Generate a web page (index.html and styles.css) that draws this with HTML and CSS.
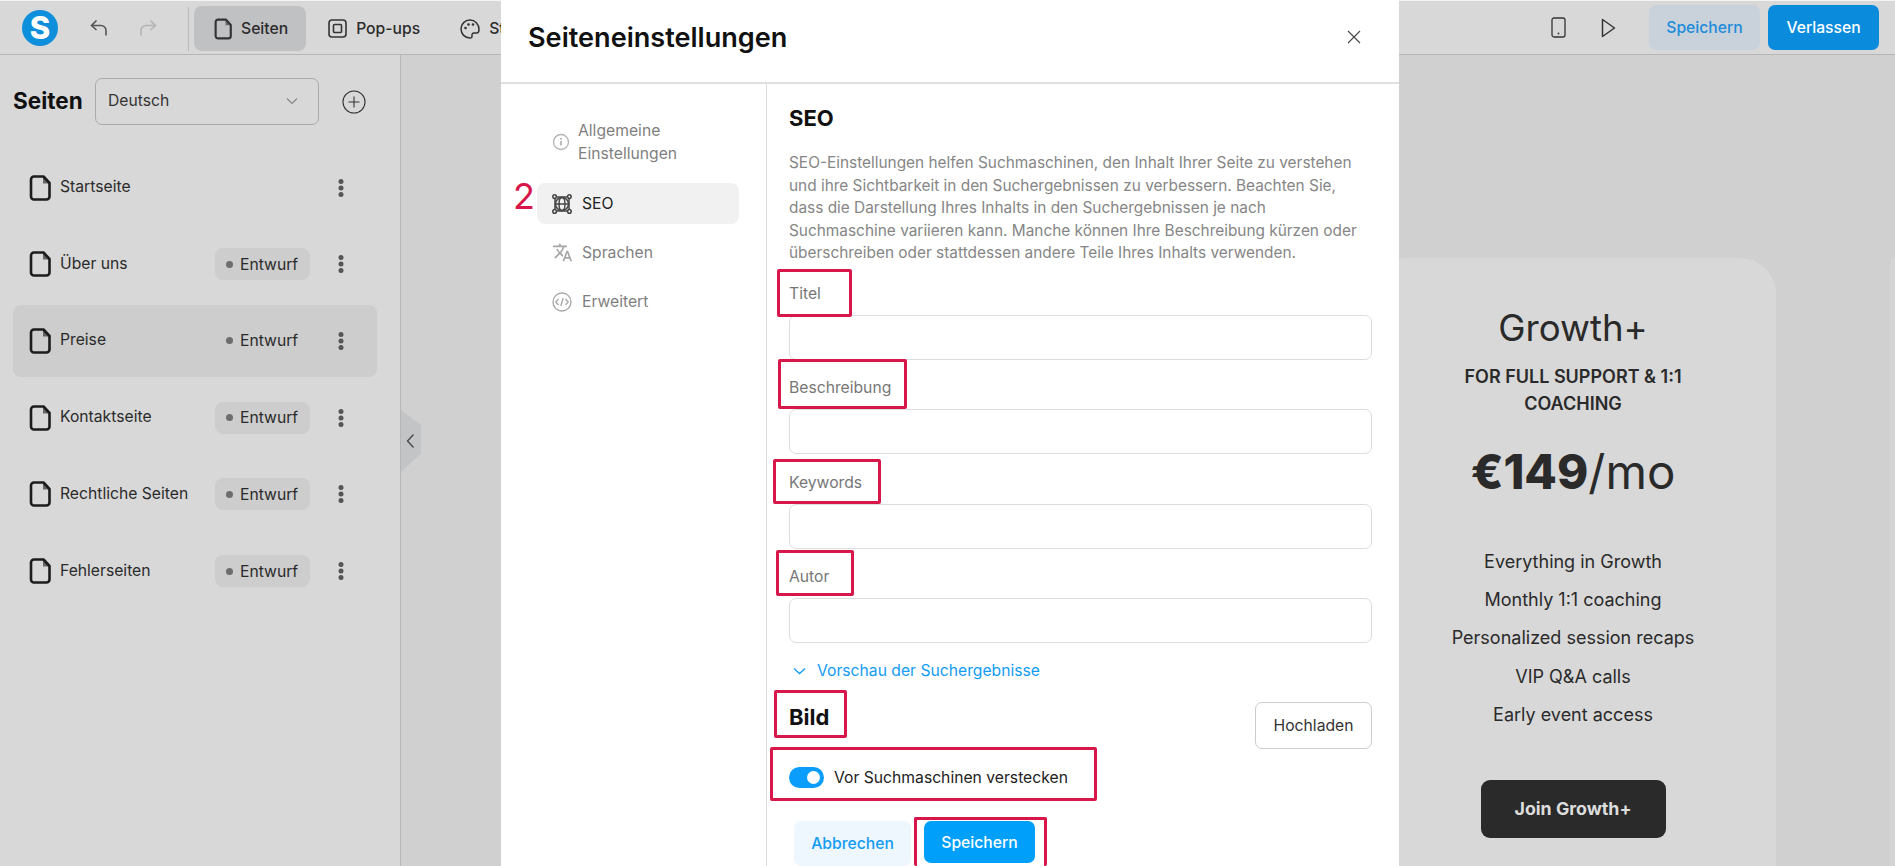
FILE: index.html
```html
<!DOCTYPE html>
<html lang="de">
<head>
  <meta charset="UTF-8" />
  <title>Seiteneinstellungen</title>
  <link rel="stylesheet" href="styles.css">
</head>
<body>
  <svg class="sprite" width="0" height="0">
    <symbol id="file" viewBox="0 0 22 26">
      <path d="M5 1.500h9.500l6 6.500v13.500a3 3 0 0 1-3 3H5a3 3 0 0 1-3-3v-17a3 3 0 0 1 3-3z" fill="none" stroke="currentColor" stroke-width="2.600" stroke-linejoin="round"/>
      <path d="M14 2v6.500h6z" fill="currentColor" opacity=".6"/>
    </symbol>
    <symbol id="dots" viewBox="0 0 6 18">
      <circle cx="3" cy="2.500" r="2.500" fill="currentColor"/>
      <circle cx="3" cy="9" r="2.500" fill="currentColor"/>
      <circle cx="3" cy="15.500" r="2.500" fill="currentColor"/>
    </symbol>
  </svg>

  <div class="app">
    <header class="topbar">
      <div class="logo">S</div>
      <svg class="history" width="18" height="18" viewBox="0 0 18 18"><path d="M6.500 1.500 1.500 6.500l5 4.500M2 6.500h9a5 5 0 0 1 5 5v5" fill="none" stroke="currentColor" stroke-width="1.600"/></svg>
      <svg class="history redo" width="18" height="18" viewBox="0 0 18 18"><path d="M11.500 1.500l5 5-5 4.500M16 6.500H7a5 5 0 0 0-5 5v5" fill="none" stroke="currentColor" stroke-width="1.600"/></svg>
      <div class="divider"></div>
      <a class="tab tab-active">
        <svg class="tab-icon" width="18" height="22"><use href="#file"/></svg>
        Seiten
      </a>
      <a class="tab">
        <svg class="tab-icon" width="19" height="19" viewBox="0 0 19 19"><rect x="1" y="1" width="17" height="17" rx="3" fill="none" stroke="currentColor" stroke-width="1.600"/><rect x="5.500" y="5.500" width="8" height="8" rx="1" fill="none" stroke="currentColor" stroke-width="1.600"/></svg>
        Pop-ups
      </a>
      <a class="tab">
        <svg class="tab-icon" width="20" height="20" viewBox="0 0 20 20"><path d="M10 1a9 9 0 0 0 0 18c1.600 0 2.200-1 2-2.200-.3-1.500.4-2.800 2-2.800h2.500c1.600 0 2.500-1 2.500-3.500C19 5 15 1 10 1z" fill="none" stroke="currentColor" stroke-width="1.500"/><circle cx="5.500" cy="9" r="1.300" fill="currentColor"/><circle cx="8.500" cy="5.500" r="1.300" fill="currentColor"/><circle cx="13" cy="5.500" r="1.300" fill="currentColor"/></svg>
        Stile
      </a>
      <div class="topbar-right">
        <svg class="top-icon" width="15" height="21" viewBox="0 0 15 21"><rect x="1" y="1" width="13" height="19" rx="2" fill="none" stroke="currentColor" stroke-width="1.300"/><circle cx="7.500" cy="16.500" r=".9" fill="currentColor"/></svg>
        <svg class="top-icon play" width="15" height="20" viewBox="0 0 15 20"><path d="M1.500 1.500v17L13.500 10z" fill="none" stroke="currentColor" stroke-width="1.500" stroke-linejoin="round"/></svg>
        <button class="top-btn top-save">Speichern</button>
        <button class="top-btn top-leave">Verlassen</button>
      </div>
    </header>

    <div class="workspace">
      <aside class="sidebar">
        <div class="sidebar-head">
          <h2>Seiten</h2>
          <div class="lang-select">
            Deutsch
            <svg width="12" height="8" viewBox="0 0 12 8"><path d="M1 1.500l5 5 5-5" fill="none" stroke="currentColor" stroke-width="1.200"/></svg>
          </div>
          <svg class="add" width="24" height="24" viewBox="0 0 24 24"><circle cx="12" cy="12" r="11" fill="none" stroke="currentColor" stroke-width="1.100"/><path d="M12 6.500v11M6.500 12h11" stroke="currentColor" stroke-width="1.100"/></svg>
        </div>
        <ul class="page-list">
          <li class="page-row">
            <svg class="page-icon" width="22" height="26"><use href="#file"/></svg>
            <span class="page-name">Startseite</span>
            <svg class="page-menu" width="6" height="18"><use href="#dots"/></svg>
          </li>
          <li class="page-row">
            <svg class="page-icon" width="22" height="26"><use href="#file"/></svg>
            <span class="page-name">Über uns</span>
            <span class="badge">Entwurf</span>
            <svg class="page-menu" width="6" height="18"><use href="#dots"/></svg>
          </li>
          <li class="page-row page-row-active">
            <svg class="page-icon" width="22" height="26"><use href="#file"/></svg>
            <span class="page-name">Preise</span>
            <span class="badge">Entwurf</span>
            <svg class="page-menu" width="6" height="18"><use href="#dots"/></svg>
          </li>
          <li class="page-row">
            <svg class="page-icon" width="22" height="26"><use href="#file"/></svg>
            <span class="page-name">Kontaktseite</span>
            <span class="badge">Entwurf</span>
            <svg class="page-menu" width="6" height="18"><use href="#dots"/></svg>
          </li>
          <li class="page-row">
            <svg class="page-icon" width="22" height="26"><use href="#file"/></svg>
            <span class="page-name">Rechtliche Seiten</span>
            <span class="badge">Entwurf</span>
            <svg class="page-menu" width="6" height="18"><use href="#dots"/></svg>
          </li>
          <li class="page-row">
            <svg class="page-icon" width="22" height="26"><use href="#file"/></svg>
            <span class="page-name">Fehlerseiten</span>
            <span class="badge">Entwurf</span>
            <svg class="page-menu" width="6" height="18"><use href="#dots"/></svg>
          </li>
        </ul>
      </aside>

      <main class="canvas">
        <div class="collapse">
          <svg width="9" height="16" viewBox="0 0 9 16"><path d="M7.500 1.500 1.500 8l6 6.500" fill="none" stroke="currentColor" stroke-width="1.300"/></svg>
        </div>
        <section class="price-card">
          <h3>Growth+</h3>
          <p class="price-sub">FOR FULL SUPPORT &amp; 1:1 COACHING</p>
          <p class="price"><b>€149</b>/mo</p>
          <ul class="price-features">
            <li>Everything in Growth</li>
            <li>Monthly 1:1 coaching</li>
            <li>Personalized session recaps</li>
            <li>VIP Q&amp;A calls</li>
            <li>Early event access</li>
          </ul>
          <button class="join">Join Growth+</button>
        </section>
        <div class="canvas-edge"></div>
      </main>
    </div>
  </div>

  <div class="modal">
    <div class="modal-head">
      <h1>Seiteneinstellungen</h1>
      <svg class="close" width="14" height="14" viewBox="0 0 14 14"><path d="M1 1l12 12M13 1 1 13" stroke="currentColor" stroke-width="1.100"/></svg>
    </div>
    <div class="modal-body">
      <nav class="modal-nav">
        <a class="nav-item nav-general">
          <svg width="18" height="18" viewBox="0 0 18 18"><circle cx="9" cy="9" r="7.500" fill="none" stroke="#b4b4b4" stroke-width="1.300"/><path d="M9 8v4.500" stroke="#999" stroke-width="1.300"/><circle cx="9" cy="5.800" r=".9" fill="#999"/></svg>
          <span>Allgemeine Einstellungen</span>
        </a>
        <a class="nav-item nav-active">
          <svg width="20" height="20" viewBox="0 0 20 20" fill="none" stroke="#444" stroke-width="1.500"><circle cx="2.600" cy="2.600" r="1.800"/><circle cx="17.400" cy="2.600" r="1.800"/><circle cx="2.600" cy="17.400" r="1.800"/><circle cx="17.400" cy="17.400" r="1.800"/><path d="M4.500 3h11M4.500 17h11M3 4.500v11M17 4.500v11"/><circle cx="10" cy="10" r="6.500"/><ellipse cx="10" cy="10" rx="3" ry="6.500"/><path d="M3.500 10h13"/></svg>
          <span>SEO</span>
        </a>
        <a class="nav-item nav-lang">
          <svg width="21" height="21" viewBox="0 0 24 24"><path fill="#a6a6a6" d="M12.870 15.070l-2.540-2.510.03-.03c1.740-1.940 2.980-4.170 3.710-6.530H17V4h-7V2H8v2H1v1.990h11.170C11.500 7.920 10.440 9.750 9 11.350 8.070 10.320 7.300 9.190 6.690 8h-2c.73 1.630 1.730 3.170 2.980 4.560l-5.090 5.020L4 19l5-5 3.110 3.110.76-2.040zM18.500 10h-2L12 22h2l1.120-3h4.750L21 22h2l-4.500-12zm-2.620 7l1.620-4.330L19.120 17h-3.240z"/></svg>
          <span>Sprachen</span>
        </a>
        <a class="nav-item">
          <svg width="20" height="20" viewBox="0 0 20 20" fill="none" stroke="#a6a6a6" stroke-width="1.300"><circle cx="10" cy="10" r="9"/><path d="M6.500 7 3.800 10l2.700 3M13.500 7l2.700 3-2.700 3M11.200 6l-2.400 8"/></svg>
          <span>Erweitert</span>
        </a>
      </nav>

      <div class="seo-panel">
        <h2>SEO</h2>
        <p class="seo-text">SEO-Einstellungen helfen Suchmaschinen, den Inhalt Ihrer Seite zu verstehen und ihre Sichtbarkeit in den Suchergebnissen zu verbessern. Beachten Sie, dass die Darstellung Ihres Inhalts in den Suchergebnissen je nach Suchmaschine variieren kann. Manche können Ihre Beschreibung kürzen oder überschreiben oder stattdessen andere Teile Ihres Inhalts verwenden.</p>
        <label class="field-label">Titel</label>
        <input class="field" type="text" />
        <label class="field-label">Beschreibung</label>
        <input class="field" type="text" />
        <label class="field-label">Keywords</label>
        <input class="field" type="text" />
        <label class="field-label">Autor</label>
        <input class="field" type="text" />
        <a class="preview-link">
          <svg width="13" height="8" viewBox="0 0 13 8"><path d="M1 1.500l5.500 5 5.500-5" fill="none" stroke="currentColor" stroke-width="1.300"/></svg>
          Vorschau der Suchergebnisse
        </a>
        <div class="image-row">
          <h2>Bild</h2>
          <button class="upload">Hochladen</button>
        </div>
        <div class="toggle-row">
          <span class="toggle"></span>
          Vor Suchmaschinen verstecken
        </div>
        <div class="modal-actions">
          <button class="btn-cancel">Abbrechen</button>
          <button class="btn-save">Speichern</button>
        </div>
      </div>
    </div>

    <span class="step-number">2</span>
    <span class="mark mark-title"></span>
    <span class="mark mark-desc"></span>
    <span class="mark mark-keywords"></span>
    <span class="mark mark-author"></span>
    <span class="mark mark-image"></span>
    <span class="mark mark-toggle"></span>
    <span class="mark mark-save"></span>
  </div>
</body>
</html>
```
FILE: styles.css
```css
* {
  box-sizing: border-box;
}

html, body {
  height: 100%;
}

body {
  margin: 0;
  overflow: hidden;
  font-family: 'Inter', 'Liberation Sans', sans-serif;
  font-size: 15.7px;
  color: #222;
  background: #d0d0d0;
}

.sprite {
  position: absolute;
}

ul {
  list-style: none;
  margin: 0;
  padding: 0;
}

button {
  font-family: inherit;
  cursor: pointer;
  border: none;
}

.app {
  display: flex;
  flex-direction: column;
  height: 100vh;
  padding-top: 1px;
  background: #f4f4f4;
}

/* top bar */
.topbar {
  display: flex;
  align-items: center;
  height: 54px;
  flex-shrink: 0;
  padding: 0 16px 0 22px;
  background: #d8d8d8;
  border-bottom: 1px solid #b6b6b6;
}

.logo {
  display: flex;
  align-items: center;
  justify-content: center;
  width: 36px;
  height: 36px;
  border-radius: 50%;
  background: #0d8fdc;
  color: #fff;
  font-size: 31px;
  font-weight: 800;
  line-height: 1;
}

.history {
  margin-left: 32px;
  color: #555;
}

.history.redo {
  margin-left: 31px;
  color: #b4b4b4;
}

.divider {
  width: 1px;
  height: 44px;
  margin: 2px 5px 0 31px;
  background: #bbb;
}

.tab {
  display: flex;
  align-items: center;
  gap: 9px;
  height: 45px;
  margin-top: 2px;
  padding: 0 18px 0 20px;
  border-radius: 8px;
  color: #2b2b2b;
  font-weight: 500;
}

.tab + .tab {
  margin-left: 2px;
}

.tab-icon {
  flex-shrink: 0;
  color: #333;
}

.tab-active {
  background: #c0c1c3;
}

.topbar-right {
  display: flex;
  align-items: center;
  margin-left: auto;
}

.top-icon {
  color: #333;
}

.top-icon.play {
  margin: 0 33px 0 35px;
}

.top-btn {
  width: 111px;
  height: 45px;
  border-radius: 7px;
  font-size: 15.7px;
  font-weight: 500;
}

.top-save {
  background: #c9d2da;
  color: #1b8bdc;
  margin-right: 8px;
}

.top-leave {
  background: #0a8bdc;
  color: #fff;
}

/* sidebar */
.workspace {
  display: flex;
  flex: 1;
  min-height: 0;
  overflow: hidden;
}

.sidebar {
  width: 401px;
  flex-shrink: 0;
  padding: 23px 23px 0 13px;
  background: #d8d8d8;
  border-right: 1px solid #b6b6b6;
}

.sidebar-head {
  display: flex;
  align-items: center;
  height: 47px;
}

.sidebar-head h2 {
  margin: 0 0 2px;
  width: 82px;
  font-size: 22.500px;
  font-weight: 700;
  color: #111;
}

.lang-select {
  display: flex;
  align-items: center;
  justify-content: space-between;
  width: 224px;
  height: 47px;
  padding: 0 20px 2px 12px;
  border: 1px solid #aaa;
  border-radius: 7px;
  color: #333;
}

.lang-select svg {
  color: #888;
}

.add {
  margin-left: 23px;
  color: #333;
}

.page-list {
  display: flex;
  flex-direction: column;
  gap: 4.700px;
  margin-top: 26.600px;
}

.page-row {
  display: flex;
  align-items: center;
  height: 72px;
  padding: 0 33px 0 16px;
  border-radius: 8px;
  color: #2a2a2a;
}

.page-row-active {
  background: #cdcdcd;
}

.page-icon {
  flex-shrink: 0;
  color: #1c1c1c;
  margin-right: 9px;
}

.page-name {
  flex: 1;
  margin-top: -2px;
}

.badge {
  display: flex;
  align-items: center;
  gap: 7px;
  width: 95px;
  height: 32px;
  padding-left: 11px;
  border-radius: 8px;
  background: #cdcdcd;
  color: #2a2a2a;
}

.badge::before {
  content: "";
  width: 7px;
  height: 7px;
  border-radius: 50%;
  background: #6d6d6d;
}

.page-menu {
  margin-left: 28px;
  color: #555;
}

/* canvas behind the modal */
.canvas {
  flex: 1;
  display: flex;
  position: relative;
  min-width: 0;
  overflow: hidden;
  padding-top: 203px;
  background: #d0d0d0;
}

.collapse {
  position: absolute;
  left: 0;
  top: 355px;
  display: flex;
  align-items: center;
  padding-left: 5px;
  width: 20px;
  height: 62px;
  background: #c3c4c6;
  color: #444;
  clip-path: polygon(0 0, 100% 24%, 100% 70%, 0 100%);
}

.price-card {
  flex-shrink: 0;
  width: 406px;
  height: 700px;
  margin-left: 969px;
  padding: 48px 60px 0;
  border-radius: 36px;
  background: #d8d8d8;
  color: #2a2a2a;
  text-align: center;
}

.price-card h3 {
  margin: 0;
  font-size: 36.600px;
  line-height: 44px;
  font-weight: 400;
}

.price-sub {
  margin: 12.500px 0 0;
  font-size: 18px;
  line-height: 27px;
  font-weight: 600;
}

.price {
  margin: 27.500px 0 0;
  font-size: 47.400px;
  line-height: 56px;
}

.price b {
  font-weight: 800;
}

.price-features {
  margin: 46px -30px 0;
  font-size: 18px;
}

.price-features li {
  height: 32px;
  line-height: 32px;
  margin-bottom: 6.200px;
}

.join {
  width: 185px;
  height: 58px;
  margin-top: 43px;
  border-radius: 9px;
  background: #2a2a2a;
  color: #ddd;
  font-size: 17.800px;
  font-weight: 700;
}

.canvas-edge {
  margin-left: auto;
  width: 5px;
  background: #d4d4d4;
}

/* modal */
.modal {
  position: absolute;
  left: 501px;
  top: 0;
  width: 898px;
  height: 100%;
  display: flex;
  flex-direction: column;
  overflow: hidden;
  background: #fff;
}

.modal-head {
  display: flex;
  align-items: center;
  justify-content: space-between;
  flex-shrink: 0;
  height: 84px;
  padding: 0 38px 8px 27px;
  border-bottom: 2px solid #e0e0e0;
}

.modal-head h1 {
  margin: 0;
  font-size: 27.100px;
  font-weight: 600;
  color: #111;
}

.close {
  color: #444;
}

.modal-body {
  display: flex;
  flex: 1;
  min-height: 0;
}

.modal-nav {
  width: 266px;
  flex-shrink: 0;
  padding: 32px 27px 0 36px;
  border-right: 1px solid #dcdcdc;
}

.nav-item {
  display: flex;
  align-items: center;
  gap: 10px;
  height: 41px;
  margin-bottom: 8px;
  padding-left: 15px;
  border-radius: 8px;
  color: #7f7f7f;
}

.nav-item svg {
  flex-shrink: 0;
}

.nav-general {
  height: 52px;
  gap: 8px;
  margin-bottom: 15px;
  line-height: 23px;
}

.nav-general span {
  width: 130px;
}

.nav-lang {
  gap: 9px;
}

.nav-active {
  background: #f1f1f1;
  color: #222;
}

.seo-panel {
  flex: 1;
  min-width: 0;
  padding: 20px 27px 0 22px;
}

.seo-panel h2 {
  margin: 0;
  font-size: 22px;
  line-height: 28px;
  font-weight: 700;
  color: #111;
}

.seo-text {
  margin: 20px 0 0;
  font-size: 15.400px;
  line-height: 22.500px;
  color: #868686;
}

.field-label {
  display: block;
  margin-top: 16.500px;
  height: 24px;
  line-height: 24px;
  color: #777;
}

.field {
  display: block;
  width: 100%;
  height: 45px;
  margin-top: 9px;
  border: 1px solid #ddd;
  border-radius: 7px;
  background: #fff;
}

.seo-text + .field-label {
  margin-top: 17px;
}

.preview-link {
  display: flex;
  align-items: center;
  gap: 11px;
  margin-top: 18px;
  padding-left: 4px;
  line-height: 20px;
  color: #129cf3;
}

.image-row {
  display: flex;
  align-items: flex-start;
  justify-content: space-between;
  margin-top: 21px;
}

.image-row h2 {
  padding-top: 1px;
}

.upload {
  width: 117px;
  height: 47px;
  border: 1px solid #ccc;
  border-radius: 7px;
  background: #fff;
  color: #333;
  font-size: 15.700px;
}

.toggle-row {
  display: flex;
  align-items: center;
  gap: 10px;
  margin-top: 18px;
  height: 21px;
  color: #222;
}

.toggle {
  position: relative;
  width: 35px;
  height: 21px;
  border-radius: 11px;
  background: #0a9dfb;
}

.toggle::after {
  content: "";
  position: absolute;
  right: 4px;
  top: 4px;
  width: 13px;
  height: 13px;
  border-radius: 50%;
  background: #fff;
}

.modal-actions {
  display: flex;
  gap: 13px;
  margin: 33px 0 0 5px;
}

.btn-cancel {
  width: 117px;
  height: 45px;
  border-radius: 7px;
  background: #eef6fe;
  color: #129cf3;
  font-size: 15.700px;
  font-weight: 500;
}

.btn-save {
  width: 111px;
  height: 42px;
  border-radius: 7px;
  background: #00a0fa;
  color: #fff;
  font-size: 15.700px;
  font-weight: 500;
}

/* red annotations on top of the screenshot */
.step-number {
  position: absolute;
  left: 12px;
  top: 176px;
  font-size: 36px;
  line-height: 40px;
  color: #d7174a;
}

.mark {
  position: absolute;
  border: 3px solid #d7174a;
  border-radius: 2px;
}

.mark-title {
  left: 276px;
  top: 269px;
  width: 75px;
  height: 48px;
}

.mark-desc {
  left: 277px;
  top: 359px;
  width: 129px;
  height: 50px;
}

.mark-keywords {
  left: 272px;
  top: 459px;
  width: 108px;
  height: 45px;
}

.mark-author {
  left: 275px;
  top: 550px;
  width: 78px;
  height: 46px;
}

.mark-image {
  left: 273px;
  top: 690px;
  width: 73px;
  height: 48px;
}

.mark-toggle {
  left: 269px;
  top: 747px;
  width: 327px;
  height: 54px;
}

.mark-save {
  left: 413px;
  top: 817px;
  width: 133px;
  height: 49px;
  border-bottom: none;
}
```
